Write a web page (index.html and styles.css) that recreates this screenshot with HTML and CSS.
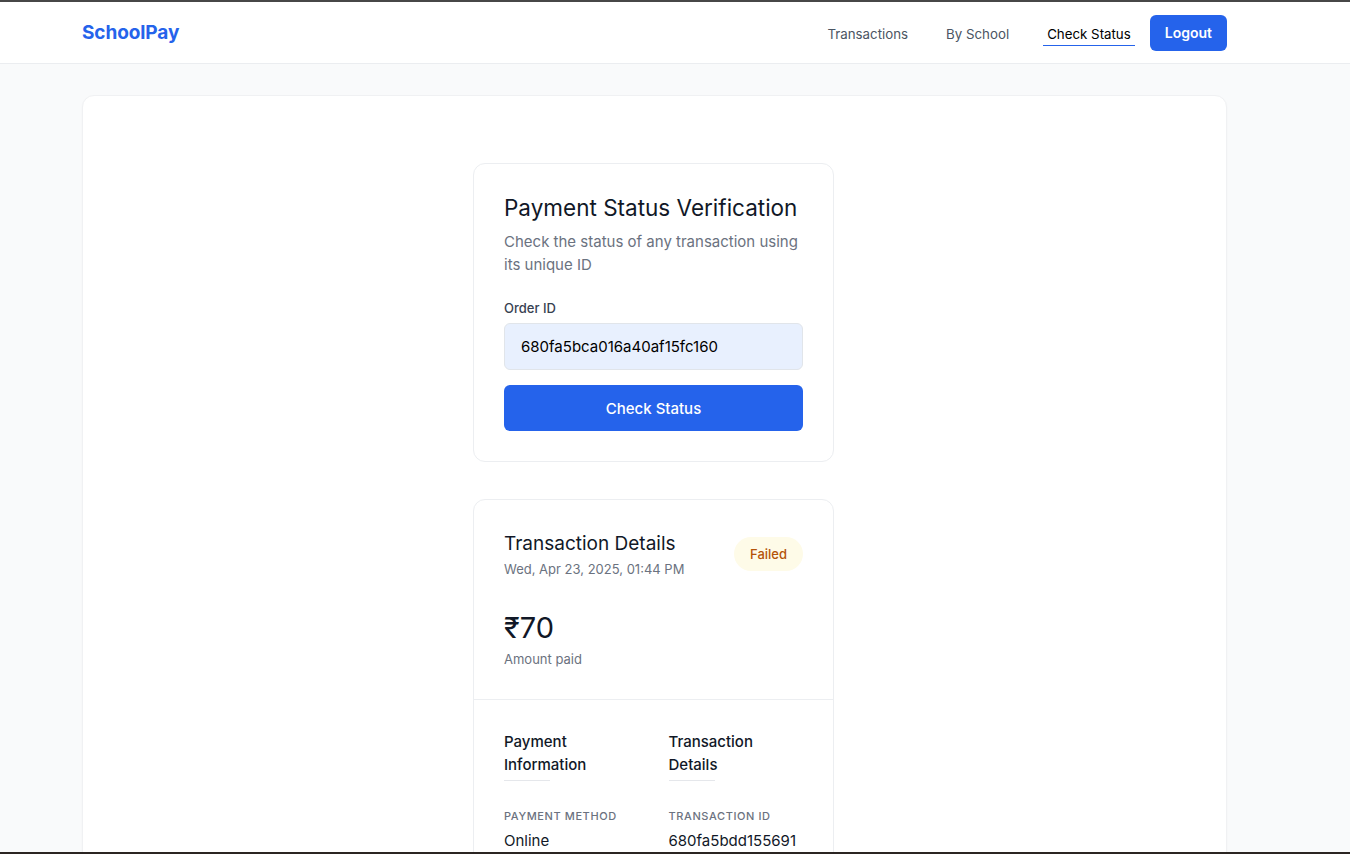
FILE: index.html
```html
<!DOCTYPE html>
<html lang="en">
<head>
<meta charset="utf-8">
<title>SchoolPay - Check Status</title>
<link rel="stylesheet" href="styles.css">
</head>
<body>
<header class="topbar">
  <div class="topbar-inner">
    <a class="logo" href="#">SchoolPay</a>
    <div class="nav-right">
      <nav class="nav-links">
        <a class="nav-link" href="#">Transactions</a>
        <a class="nav-link" href="#">By School</a>
        <a class="nav-link active" href="#">Check Status</a>
      </nav>
      <button class="btn-logout">Logout</button>
    </div>
  </div>
</header>
<main class="page">
  <section class="panel">
    <div class="stack">
      <div class="card form-card">
        <h1 class="form-title">Payment Status Verification</h1>
        <p class="form-sub">Check the status of any transaction using its unique ID</p>
        <label class="field-label" for="order">Order ID</label>
        <input id="order" class="field-input" type="text" value="680fa5bca016a40af15fc160">
        <button class="btn-primary">Check Status</button>
      </div>
      <div class="card detail-card">
        <div class="detail-head">
          <div class="head-row">
            <div>
              <h2 class="detail-title">Transaction Details</h2>
              <div class="detail-date">Wed, Apr 23, 2025, 01:44 PM</div>
            </div>
            <span class="badge">Failed</span>
          </div>
          <div class="amount">₹70</div>
          <div class="amount-label">Amount paid</div>
        </div>
        <div class="detail-body">
          <div class="col">
            <h3 class="col-title">Payment Information</h3>
            <div class="kv-label">Payment Method</div>
            <div class="kv-value">Online</div>
          </div>
          <div class="col">
            <h3 class="col-title">Transaction Details</h3>
            <div class="kv-label">Transaction ID</div>
            <div class="kv-value">680fa5bdd155691</div>
          </div>
        </div>
      </div>
    </div>
  </section>
</main>
</body>
</html>
```
FILE: styles.css
```css
* { box-sizing: border-box; }
html {
  border-top: 2px solid #474747;
}
html::after {
  content: "";
  position: fixed;
  left: 0;
  right: 0;
  bottom: 0;
  height: 2px;
  background: #2b2522;
}
body {
  margin: 0;
  font-family: Inter, "Noto Sans", "Liberation Sans", sans-serif;
  background: #f9fafb;
  color: #111827;
  overflow: hidden;
  height: 852px;
}
.topbar {
  background: #fff;
  border-bottom: 1px solid #ebedf0;
  height: 62px;
}
.topbar-inner {
  width: 1145px;
  margin-left: 82px;
  height: 100%;
  display: flex;
  align-items: center;
  justify-content: space-between;
}
.logo {
  color: #2563eb;
  font-weight: 700;
  font-size: 19px;
  text-decoration: none;
  letter-spacing: -0.1px;
}
.nav-right {
  display: flex;
  align-items: center;
  gap: 15px;
}
.nav-links {
  display: flex;
  align-items: center;
  gap: 30px;
}
.nav-link {
  font-size: 13.3px;
  color: #4b5563;
  text-decoration: none;
  padding: 7px 4px 3px;
  border-bottom: 1px solid transparent;
}
.nav-link.active {
  color: #000;
  border-bottom-color: #2563eb;
}
.btn-logout {
  background: #2563eb;
  color: #fff;
  border: 0;
  border-radius: 6px;
  height: 36px;
  padding: 0 15px;
  font-family: inherit;
  font-size: 14px;
  font-weight: 600;
}
.page {
  padding-top: 31px;
}
.panel {
  width: 1145px;
  margin-left: 82px;
  background: #fff;
  border-radius: 12px;
  border: 1px solid #f0f1f3;
  box-shadow: 0 1px 2px rgba(0,0,0,0.03);
  padding: 67px 0 40px;
  min-height: 900px;
}
.stack {
  width: 361px;
  margin-left: 390px;
  display: flex;
  flex-direction: column;
  gap: 37px;
}
.card {
  background: #fff;
  border: 1px solid #eceef1;
  border-radius: 12px;
}
.form-card {
  padding: 28px 30px 30px;
}
.form-title {
  margin: 0;
  font-size: 22.5px;
  font-weight: 400;
  line-height: 32px;
  color: #111827;
}
.form-sub {
  margin: 6px 0 0;
  font-size: 15px;
  line-height: 23px;
  color: #6b7280;
}
.field-label {
  display: block;
  margin-top: 22px;
  font-size: 13px;
  font-weight: 500;
  color: #374151;
  line-height: 20px;
}
.field-input {
  display: block;
  width: 100%;
  margin-top: 5px;
  height: 47px;
  background: #e8f0fe;
  border: 1px solid #e1e5ea;
  border-radius: 6px;
  padding: 0 16px;
  font-family: inherit;
  font-size: 15px;
  color: #000;
}
.btn-primary {
  display: block;
  width: 100%;
  margin-top: 15px;
  height: 46px;
  background: #2563eb;
  color: #fff;
  border: 0;
  border-radius: 6px;
  font-family: inherit;
  font-size: 15px;
  font-weight: 500;
}
.detail-head {
  padding: 30px 30px 30px;
  border-bottom: 1px solid #eceef1;
}
.head-row {
  display: flex;
  justify-content: space-between;
  align-items: flex-start;
}
.detail-title {
  margin: 0;
  font-size: 19px;
  font-weight: 400;
  line-height: 28px;
}
.detail-date {
  font-size: 13px;
  color: #6b7280;
  line-height: 20px;
  margin-top: 1px;
}
.badge {
  margin-top: 7px;
  background: #fefbe8;
  color: #b45309;
  font-size: 13px;
  font-weight: 500;
  padding: 0 16px;
  height: 34px;
  line-height: 34px;
  border-radius: 17px;
}
.amount {
  margin-top: 29px;
  font-size: 29px;
  line-height: 40px;
  color: #111827;
}
.amount-label {
  margin-top: 1px;
  font-size: 13px;
  color: #6b7280;
  line-height: 20px;
}
.detail-body {
  padding: 30px 30px 30px;
  display: grid;
  grid-template-columns: 1fr 1fr;
  column-gap: 30px;
}
.col-title {
  margin: 0;
  font-size: 15px;
  font-weight: 500;
  line-height: 23px;
  padding-bottom: 5px;
  position: relative;
}
.col-title::after {
  content: "";
  position: absolute;
  left: 0;
  bottom: 0;
  width: 46px;
  height: 1px;
  background: #e5e7eb;
}
.kv-label {
  margin-top: 27px;
  font-size: 11px;
  font-weight: 500;
  letter-spacing: 0.6px;
  text-transform: uppercase;
  color: #6b7280;
  line-height: 16px;
}
.kv-value {
  margin-top: 6px;
  font-size: 15px;
  line-height: 22px;
  color: #111827;
}
```
